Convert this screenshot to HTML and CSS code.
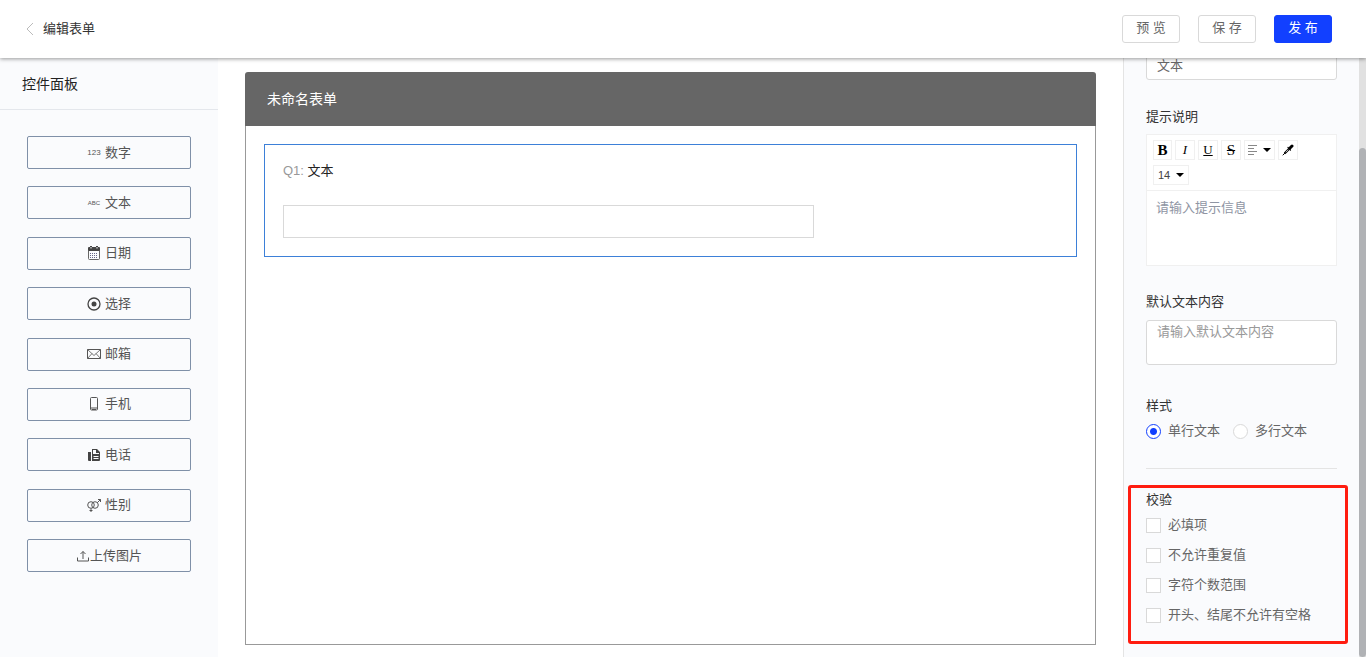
FILE: index.html
```html
<!DOCTYPE html>
<html lang="zh-CN">
<head>
    <meta charset="UTF-8">
    <meta name="viewport" content="width=device-width, initial-scale=1.0">
    <title>编辑表单</title>
    <link rel="stylesheet" href="styles.css">
</head>
<body>
    <header class="topbar">
        <a class="back" href="#">
            <svg width="8" height="14" viewBox="0 0 8 14" fill="none" stroke="#bbb"><path d="M7 1L1 7l6 6"/></svg>
            <span>编辑表单</span>
        </a>
        <div class="topbar-actions">
            <button class="btn" type="button">预 览</button>
            <button class="btn" type="button">保 存</button>
            <button class="btn btn-primary" type="button">发 布</button>
        </div>
    </header>

    <div class="layout">
        <!-- 控件面板 -->
        <aside class="sidebar">
            <h2 class="sidebar-title">控件面板</h2>
            <div class="widgets">
                <button class="widget" type="button"><span class="glyph">123</span>数字</button>
                <button class="widget" type="button"><span class="glyph glyph-abc">ABC</span>文本</button>
                <button class="widget" type="button">
                    <svg class="icon" viewBox="0 0 14 14"><path fill="#444" d="M1 2q0-1 1-1h1V0h2v1h4V0h2v1h1q1 0 1 1v3H1z"/><path fill="#fafbfd" d="M3.500 1h1v1.500h-1zM9.500 1h1v1.500h-1z"/><path fill="none" stroke="#666" d="M1.500 4.500v8q0 1 1 1h9q1 0 1-1v-8"/><path stroke="#668" stroke-dasharray="1 1" d="M3 7.500h8M3 9.500h8M3 11.500h8"/></svg>日期
                </button>
                <button class="widget" type="button">
                    <svg class="icon" viewBox="0 0 14 14"><circle cx="7" cy="7" r="6" fill="none" stroke="#444" stroke-width="1.300"/><circle cx="7" cy="7" r="2.500" fill="#444"/></svg>选择
                </button>
                <button class="widget" type="button">
                    <svg class="icon" viewBox="0 0 14 14" fill="none" stroke="#555"><path d="M.5 2.500h13v9H.5z"/><path stroke-width=".8" d="M.5 2.500L7 8.500l6.500-6M.5 11.500l4.500-5M13.500 11.500L9 6.500"/></svg>邮箱
                </button>
                <button class="widget" type="button">
                    <svg class="icon" viewBox="0 0 14 14" fill="none" stroke="#555"><rect x="3.500" y=".5" width="7" height="12.500" rx="1"/><path d="M4 11h6M5 12.500h4"/></svg>手机
                </button>
                <button class="widget" type="button">
                    <svg class="icon" viewBox="0 0 14 14"><path fill="#444" d="M1 4h3v9H2q-1 0-1-1z"/><path fill="#444" fill-rule="evenodd" d="M5 1h5l3 3v8q0 1-1 1H5zM6 2v4h6V5H9V2zM6.500 8v1h5V8zM6.500 10v1h5v-1z"/></svg>电话
                </button>
                <button class="widget" type="button">
                    <svg class="icon" viewBox="0 0 14 14" fill="none" stroke="#555"><circle cx="4" cy="7" r="3.300"/><circle cx="8" cy="7" r="3.300"/><path d="M10.300 4.700L13.500 1.500M11 1.500h2.500V4M4 10.500V14M2.500 12.500h3"/></svg>性别
                </button>
                <button class="widget widget-tight" type="button">
                    <svg class="icon" viewBox="0 0 14 14" fill="none" stroke="#555"><path d="M1.500 8.500v3.500h11V8.500M7 10V2.500M4.500 5L7 2.500 9.500 5"/></svg>上传图片
                </button>
            </div>
        </aside>

        <main class="workspace">
            <section class="form">
                <h1 class="form-title">未命名表单</h1>
                <div class="form-body">
                    <div class="question">
                        <label class="question-label" for="q1"><span class="question-no">Q1:</span> 文本</label>
                        <input class="question-input" id="q1" type="text">
                    </div>
                </div>
            </section>
        </main>

        <aside class="settings">
            <div class="settings-body">
                <input class="text-input" type="text" value="文本" aria-label="标题">

                <h3 class="label label-tip">提示说明</h3>
                <div class="editor">
                    <div class="toolbar">
                        <button class="tool tool-bold" type="button">B</button>
                        <button class="tool tool-italic" type="button">I</button>
                        <button class="tool tool-underline" type="button">U</button>
                        <button class="tool tool-strike" type="button">S</button>
                        <button class="tool tool-wide" type="button" aria-label="对齐">
                            <svg width="10" height="10" viewBox="0 0 10 10" stroke="#888"><path d="M0 .5h9M0 3.500h6M0 6.500h9M0 9.500h6"/></svg>
                            <span class="caret"></span>
                        </button>
                        <button class="tool" type="button" aria-label="颜色">
                            <svg width="12" height="12" viewBox="0 0 12 12" fill="none" stroke="#000" stroke-linecap="round"><path stroke-width="3" d="M8.500 3.500l1.500-1.500"/><path stroke-width="1.200" d="M6 3.500L8.500 6"/><path stroke-width="2.200" d="M3 9l4-4"/><path d="M1 11l1.500-1.500"/><path stroke="#fff" stroke-width=".7" d="M4 8l2-2"/></svg>
                        </button>
                        <button class="tool tool-size" type="button">14<span class="caret"></span></button>
                    </div>
                    <textarea class="editor-text" placeholder="请输入提示信息" aria-label="提示说明"></textarea>
                </div>

                <label class="label label-default" for="default-text">默认文本内容</label>
                <textarea class="text-area" id="default-text" placeholder="请输入默认文本内容"></textarea>

                <h3 class="label label-style">样式</h3>
                <div class="radios">
                    <label class="option"><input class="radio" type="radio" name="style" checked>单行文本</label>
                    <label class="option"><input class="radio" type="radio" name="style">多行文本</label>
                </div>
                <hr class="divider">

                <section class="checks">
                    <h3 class="label">校验</h3>
                    <label class="option"><input class="checkbox" type="checkbox">必填项</label>
                    <label class="option"><input class="checkbox" type="checkbox">不允许重复值</label>
                    <label class="option"><input class="checkbox" type="checkbox">字符个数范围</label>
                    <label class="option"><input class="checkbox" type="checkbox">开头、结尾不允许有空格</label>
                </section>
            </div>
            <div class="scrollbar"><div class="scrollbar-thumb"></div></div>
        </aside>
    </div>
</body>
</html>
```
FILE: styles.css
```css
* {
    box-sizing: border-box;
    margin: 0;
    padding: 0;
}
body {
    display: flex;
    flex-direction: column;
    height: 100vh;
    overflow: hidden;
    background: #fff;
    color: #666;
    font: 13px/20px "Liberation Sans", "Noto Sans CJK SC", sans-serif;
}
button,
input,
textarea {
    font: inherit;
    color: inherit;
}
h1,
h2,
h3 {
    font-size: 14px;
    font-weight: normal;
}

/* Top bar */
.topbar {
    display: flex;
    justify-content: space-between;
    align-items: center;
    flex: none;
    height: 58px;
    padding: 0 34px 0 26px;
    background: #fff;
    box-shadow: 0 1px 4px rgba(0, 0, 0, 0.4);
    z-index: 1;
}
.back {
    display: flex;
    align-items: center;
    gap: 9px;
    color: #333;
    text-decoration: none;
}
.topbar-actions {
    display: flex;
    gap: 18px;
}
.btn {
    width: 58px;
    height: 28px;
    padding-bottom: 2px;
    border: 1px solid #d9d9d9;
    border-radius: 3px;
    background: #fff;
    color: #666;
}
.btn-primary {
    border-color: #1240ff;
    background: #1240ff;
    color: #fff;
}

.layout {
    display: flex;
    flex: 1;
    min-height: 0;
}

/* Widget panel */
.sidebar {
    flex: none;
    width: 218px;
    background: #fafbfd;
}
.sidebar-title {
    height: 52px;
    padding: 0 22px;
    border-bottom: 1px solid #e4e7ec;
    color: #222;
    line-height: 52px;
}
.widgets {
    display: flex;
    flex-direction: column;
    justify-content: space-between;
    height: 436px;
    margin: 26px 27px 0;
}
.widget {
    display: flex;
    justify-content: center;
    align-items: center;
    gap: 4px;
    height: 33px;
    border: 1px solid #7f90a8;
    border-radius: 2px;
    background: none;
    color: #555;
}
.widget-tight {
    gap: 0;
}
.icon {
    width: 14px;
    height: 14px;
}
.glyph {
    width: 14px;
    font: 8px/12px "Liberation Sans", sans-serif;
}
.glyph-abc {
    font-size: 6px;
}

/* Form canvas */
.workspace {
    display: flex;
    flex: 1;
    padding: 14px 27px 12px;
}
.form {
    display: flex;
    flex-direction: column;
    flex: 1;
}
.form-title {
    height: 54px;
    padding: 0 22px;
    border-radius: 3px 3px 0 0;
    background: #666;
    color: #fff;
    line-height: 54px;
}
.form-body {
    flex: 1;
    padding: 18px;
    border: 1px solid #999;
    border-top: 0;
}
.question {
    padding: 16px 18px 18px;
    border: 1px solid #3d80d8;
}
.question-label {
    display: block;
    margin-bottom: 24px;
    color: #222;
}
.question-no {
    color: #999;
}
.question-input {
    display: block;
    width: 68.5%;
    height: 33px;
    padding: 0 10px;
    border: 1px solid #d9d9d9;
}

/* Settings panel */
.settings {
    display: flex;
    flex: none;
    width: 243px;
    border-left: 1px solid #e4e4e4;
    background: #fafbfd;
    overflow: hidden;
}
.settings-body {
    flex: 1;
    margin-top: -10px;
    padding: 0 22px;
}
.text-input,
.text-area {
    display: block;
    width: 100%;
    height: 32px;
    padding: 0 10px;
    border: 1px solid #d9d9d9;
    border-radius: 3px;
    background: #fff;
}
.text-area {
    height: 45px;
    padding-top: 1px;
    resize: none;
}
.text-area::placeholder {
    color: #999;
}
.label {
    display: block;
    color: #333;
    font-size: 13px;
}
.label-tip {
    margin: 27px 0 7px;
}
.label-default {
    margin: 26px 0 8px;
}
.label-style {
    margin: 31px 0 5px;
}
.editor {
    border: 1px solid #f0f0f0;
    background: #fff;
}
.toolbar {
    display: flex;
    flex-wrap: wrap;
    gap: 5px 3px;
    padding: 5px 6px;
    border-bottom: 1px solid #f0f0f0;
}
.tool {
    display: flex;
    justify-content: center;
    align-items: center;
    width: 20px;
    height: 20px;
    border: 1px solid #f0f0f0;
    background: #fff;
    color: #000;
    font: 13px/18px "Liberation Serif", serif;
}
.tool-bold {
    width: 19px;
    font-size: 15px;
    font-weight: bold;
}
.tool-italic {
    font-style: italic;
}
.tool-underline {
    text-decoration: underline;
}
.tool-strike {
    font-size: 15px;
    text-decoration: line-through;
}
.tool-wide {
    gap: 5px;
    width: 31px;
}
.tool-size {
    gap: 6px;
    width: 36px;
    color: #444;
    font: 11px/18px "Liberation Sans", sans-serif;
}
.caret {
    border: 4px solid transparent;
    border-top-color: #000;
    border-bottom: 0;
}
.editor-text {
    display: block;
    width: 100%;
    height: 74px;
    padding: 7px 9px;
    border: 0;
    resize: none;
}
.editor-text::placeholder {
    color: #8f95a3;
}
.radios {
    display: flex;
    gap: 13px;
}
.option {
    display: flex;
    align-items: center;
    gap: 7px;
}
.radio,
.checkbox {
    appearance: none;
    width: 15px;
    height: 15px;
    border: 1px solid #d9d9d9;
    background: #fff;
}
.radio {
    border-radius: 50%;
}
.radio:checked {
    border-color: #1240ff;
    background: radial-gradient(circle, #1240ff 3px, #fff 4px);
}
.divider {
    margin: 27px 0 16px;
    border: 0;
    border-top: 1px solid #e4e4e4;
}
.checks {
    display: flex;
    flex-direction: column;
    gap: 10px;
    margin: 0 -11px 0 -18px;
    padding: 2px 15px 16px;
    border: 3px solid #ff1c10;
    border-radius: 3px;
}
.checks .label {
    margin-bottom: -5px;
}
.scrollbar {
    flex: none;
    width: 7px;
    padding-top: 90px;
    background: #e1e1e1;
}
.scrollbar-thumb {
    height: 100%;
    border-radius: 4px;
    background: #b0b2b5;
}
```
